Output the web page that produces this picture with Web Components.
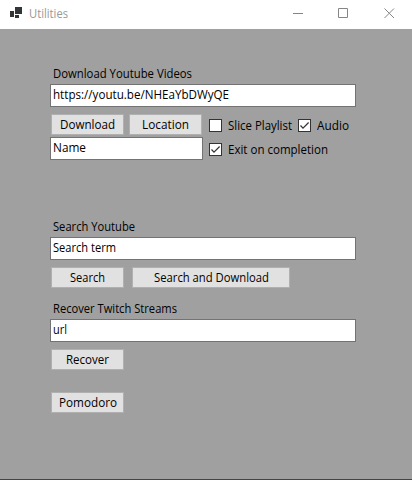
<!DOCTYPE html>
<html lang="en"><head><meta charset="utf-8"><title>Utilities</title>
<style>html,body{margin:0;height:100%;overflow:hidden}body{font:12px/16px "Open Sans","Noto Sans",sans-serif;color:#000}</style></head>
<body><utilities-window></utilities-window>
<script>
const define=(name,html,init)=>customElements.define(name,class extends HTMLElement{
  connectedCallback(){
    if(this.shadowRoot)return;
    this.attachShadow({mode:'open'}).innerHTML=html;
    if(init)init(this,this.shadowRoot);
  }
});
// A single line of text condensed to the width in its "w" attribute.
define('ui-text','<style>:host{display:block;flex:none;height:16px;box-sizing:border-box;padding-top:1px;white-space:pre}span{display:inline-block;transform-origin:0 0}</style><span><slot></slot></span>',(h,r)=>{
  const w=+h.getAttribute('w'),s=r.querySelector('span');
  h.style.width=w+'px';
  s.style.transform=`scaleX(${w/s.getBoundingClientRect().width})`;
});
define('ui-button','<style>:host{display:flex;flex:none;box-sizing:border-box;width:73px;height:21px;border:1px solid #b0b0b0;background:#e1e1e1;justify-content:center;padding-top:1px}</style><slot></slot>');
define('ui-field','<style>:host{display:block;box-sizing:border-box;width:306px;height:23px;border:1px solid #737373;background:#fff;padding:1px 2px}</style><slot></slot>');
define('ui-check',`<style>:host{display:flex;height:16px;align-items:flex-start;gap:6px}svg{flex:none;margin-top:2px}path{display:none}:host([checked]) path{display:block}</style>
<svg width="13" height="13"><rect x=".5" y=".5" width="12" height="12" fill="#fff" stroke="#333"/><path d="M2.5 6.5L5 9.2L10.6 3.5" fill="none" stroke="#333" stroke-width="1.2"/></svg><slot></slot>`);
define('title-bar',`<style>:host{display:flex;box-sizing:border-box;height:29px;background:#fff;color:#999;padding:5px 0 0 10px}
.icon{margin:2px 7px 0 0}.controls{margin:3px 14px 0 auto}</style>
<svg class="icon" width="12" height="11" fill="#333638"><path d="M5 0H12V7H5ZM0 4H4V10H0ZM5 8H9V11H5Z"/></svg><slot></slot>
<svg class="controls" width="105" height="11" fill="none" stroke="#858585"><path d="M0 5.5H10M45.5.5H54.5V9.5H45.5Z"/><path d="M91.5.5L101 10M101 .5L91.5 10"/></svg>`);
define('utilities-window',`<style>
:host{display:flex;flex-direction:column;box-sizing:border-box;width:412px;height:480px;background:#a0a0a0;border-bottom:1px solid #444}
main{padding:36px 0 0 50px}.label{margin-left:3px}.row{display:flex}
.options{display:grid;align-content:start;grid-template-columns:83px 60px;column-gap:6px;row-gap:8px;margin:3px 0 0 6px}
.tools{display:grid;grid-template-columns:153px auto;margin-top:7px}
.pair{display:flex;gap:5px;margin:0 0 2px 1px}.wide{grid-column:1/3}
</style>
<title-bar><ui-text w="39">Utilities</ui-text></title-bar>
<main>
<ui-text class="label" w="139">Download Youtube Videos</ui-text>
<ui-field style="margin-top:3px"><ui-text w="176">https://youtu.be/NHEaYbDWyQE</ui-text></ui-field>
<div class="tools"><div><div class="pair"><ui-button><ui-text w="55">Download</ui-text></ui-button><ui-button><ui-text w="47">Location</ui-text></ui-button></div>
<ui-field style="width:153px"><ui-text w="33">Name</ui-text></ui-field></div>
<div class="options"><ui-check><ui-text w="64">Slice Playlist</ui-text></ui-check><ui-check checked><ui-text w="32">Audio</ui-text></ui-check>
<ui-check class="wide" checked><ui-text w="100">Exit on completion</ui-text></ui-check></div></div>
<ui-text class="label" style="margin-top:58px" w="82">Search Youtube</ui-text>
<ui-field style="margin-top:3px"><ui-text w="63">Search term</ui-text></ui-field>
<div class="row" style="gap:8px;margin:7px 0 0 1px"><ui-button><ui-text w="35">Search</ui-text></ui-button><ui-button style="width:158px"><ui-text w="115">Search and Download</ui-text></ui-button></div>
<ui-text class="label" style="margin-top:12px" w="124">Recover Twitch Streams</ui-text>
<ui-field style="margin-top:3px"><ui-text w="14">url</ui-text></ui-field>
<ui-button style="margin:7px 0 0 1px"><ui-text w="43">Recover</ui-text></ui-button>
<ui-button style="margin:22px 0 0 1px"><ui-text w="58">Pomodoro</ui-text></ui-button>
</main>`);
</script></body></html>
